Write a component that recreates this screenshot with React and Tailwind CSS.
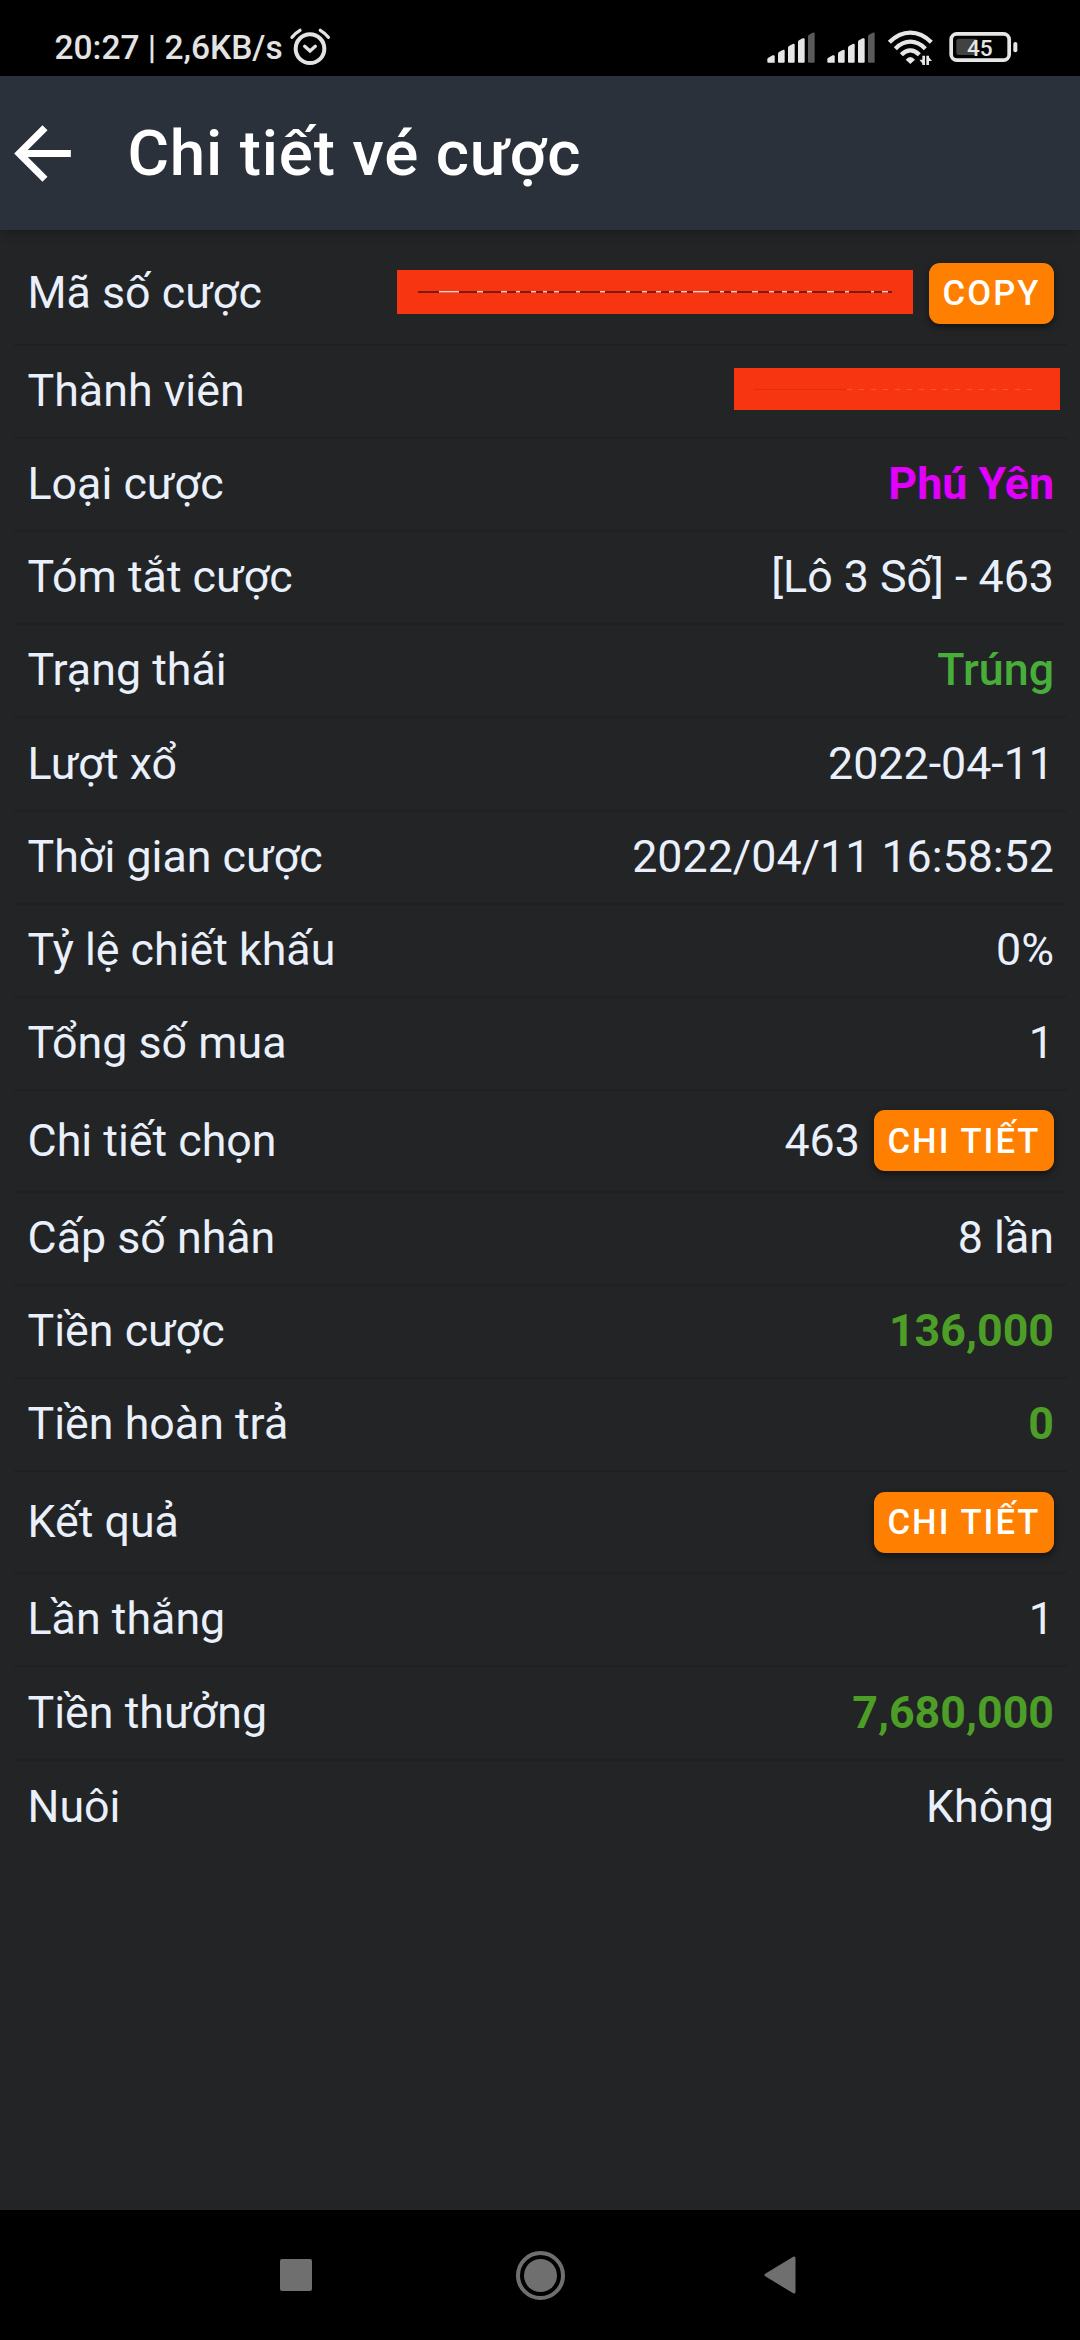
import React from "react"

const rows = [
  { label: "Mã số cược", type: "code" },
  { label: "Thành viên", type: "member" },
  { label: "Loại cược", value: "Phú Yên", style: "font-bold text-[#e100fb]" },
  { label: "Tóm tắt cược", value: "[Lô 3 Số] - 463" },
  { label: "Trạng thái", value: "Trúng", style: "font-medium text-[#48ae3a]" },
  { label: "Lượt xổ", value: "2022-04-11" },
  { label: "Thời gian cược", value: "2022/04/11 16:58:52" },
  { label: "Tỷ lệ chiết khấu", value: "0%" },
  { label: "Tổng số mua", value: "1" },
  { label: "Chi tiết chọn", value: "463", action: "CHI TIẾT" },
  { label: "Cấp số nhân", value: "8 lần" },
  { label: "Tiền cược", value: "136,000", style: "font-bold text-[#4d9e26]" },
  { label: "Tiền hoàn trả", value: "0", style: "font-bold text-[#4d9e26]" },
  { label: "Kết quả", action: "CHI TIẾT" },
  { label: "Lần thắng", value: "1" },
  { label: "Tiền thưởng", value: "7,680,000", style: "font-bold text-[#4d9e26]" },
  { label: "Nuôi", value: "Không" },
]

// [x, width] of the specks left on the strike line of the hidden code
const specks = [
  [42, 20], [80, 6], [104, 6], [119, 4], [134, 5], [146, 4], [157, 5], [179, 4],
  [203, 5], [229, 4], [245, 5], [259, 5], [272, 5], [284, 6], [296, 16], [323, 4],
  [334, 6], [355, 6], [372, 5], [385, 5], [397, 5], [410, 5], [430, 7], [448, 4],
  [474, 3], [485, 6],
]

function AlarmIcon() {
  return (
    <svg className="ml-[6px] h-[76px] w-[42px]" viewBox="865 0 126 228" fill="none" stroke="#e3e3e3" strokeLinecap="round">
      <circle cx="928" cy="146" r="43" strokeWidth="12" />
      <path d="M874 112 Q884 99 898 91M983 112 Q973 99 959 91" strokeWidth="10" />
      <path d="M912 139l16 14 16-14" strokeWidth="10" />
    </svg>
  )
}

function SignalIcon() {
  return (
    <svg className="h-[76px] w-[48px]" viewBox="81 0 144 228" fill="#e6e6e6">
      <path d="M82 178q0-3 3-5l13-7q6-2 6 3v19H85q-3 0-3-3z" />
      <path d="M114 161q0-3 3-5l11-6q6-2 6 3v32q0 3-3 3h-14q-3 0-3-3z" />
      <path d="M144 143q0-3 3-5l11-6q6-2 6 3v50q0 3-3 3h-14q-3 0-3-3z" />
      <path d="M174 126q0-3 3-5l11-6q6-2 6 3v67q0 3-3 3h-14q-3 0-3-3z" />
      <path d="M204 109q0-3 3-5l11-6q6-2 6 3v84q0 3-3 3h-14q-3 0-3-3z" fill="#5a5a5a" />
    </svg>
  )
}

function WifiIcon() {
  return (
    <svg className="ml-[12px] h-[76px] w-[47px]" viewBox="442 0 141 228" fill="none" stroke="#e6e6e6">
      <path d="M449 127Q478 98 512 98T575 127" strokeWidth="13" />
      <path d="M467 146Q488 125 512 125T557 146" strokeWidth="13" />
      <path d="M485 164Q498 151 512 151T539 164" strokeWidth="13" />
      <path d="M498 179Q512 163 526 179L512 192z" fill="#e6e6e6" stroke="none" />
      <path d="M552 167V195M564 195V167" strokeWidth="8" />
      <path d="M539 179l13 16v-16zM577 183l-13-16v16z" fill="#e6e6e6" stroke="none" />
    </svg>
  )
}

function BatteryIcon() {
  return (
    <svg className="ml-[15px] h-[76px] w-[69px]" viewBox="626 0 207 228">
      <rect x="632.5" y="101.5" width="174" height="79" rx="17" fill="none" stroke="#e6e6e6" strokeWidth="11" />
      <path d="M656 116h53v49h-53q-8 0-8-8v-33q0-8 8-8z" fill="#424242" />
      <rect x="819" y="126" width="12" height="31" rx="6" fill="#e6e6e6" />
      <text x="680" y="167" fontSize="68" fontWeight="500" fontFamily="Roboto, sans-serif" fill="#e6e6e6">45</text>
    </svg>
  )
}

function Button({ children }) {
  return (
    <button className="h-[61px] rounded-[11px] bg-[#ff7f00] px-[13.5px] text-[34.6px] leading-none font-medium tracking-[0.06em] text-white shadow-[0_3px_7px_rgba(0,0,0,0.5)]">
      {children}
    </button>
  )
}

function Value({ row }) {
  if (row.type === "code") {
    return (
      <div className="flex items-center gap-[16px]">
        <svg className="mb-[2px] h-[44px] w-[516px] bg-[#f73510]" viewBox="0 0 516 44">
          <rect x="21" y="21" width="474" height="2" fill="#7d1a12" />
          {specks.map(([x, w]) => (
            <rect key={x} x={x} y="21" width={w} height="1.5" fill="#ffd0c4" />
          ))}
        </svg>
        <Button>COPY</Button>
      </div>
    )
  }
  if (row.type === "member") {
    return (
      <svg className="-mr-[5.5px] mb-[5px] h-[42px] w-[325.5px] bg-[#f73510]" viewBox="0 0 325.5 42">
        <path d="M20 21.5H113" stroke="#df2f10" />
        <path d="M113 21.5H305" stroke="#f9563b" strokeDasharray="5 7" />
      </svg>
    )
  }
  return (
    <div className="flex items-center gap-[14px]">
      {row.value && <span className={row.style}>{row.value}</span>}
      {row.action && <Button>{row.action}</Button>}
    </div>
  )
}

export default function App() {
  return (
    <div className="flex h-[2340px] w-[1080px] flex-col bg-[#222426] font-[Roboto,'Noto_Sans',sans-serif]">
      {/* Status bar */}
      <div className="flex h-[76px] shrink-0 items-center justify-between bg-black pr-[62px] pl-[54.5px]">
        <div className="flex items-center text-[33.5px] font-medium text-[#e3e3e3]">
          <span className="pt-[20px] leading-none">20:27 | 2,6KB/s</span>
          <AlarmIcon />
        </div>
        <div className="flex items-center">
          <SignalIcon />
          <div className="ml-[12px]">
            <SignalIcon />
          </div>
          <WifiIcon />
          <BatteryIcon />
        </div>
      </div>

      {/* Header */}
      <div className="flex h-[154px] shrink-0 items-center bg-[#2b313b] shadow-[0_3px_10px_rgba(0,0,0,0.25)]">
        <svg className="size-[85px]" viewBox="0 0 24 24" fill="white">
          <path d="M20 11H7.83l5.59-5.59L12 4l-8 8 8 8 1.41-1.41L7.83 13H20v-2z" />
        </svg>
        <h1 className="ml-[42.5px] pt-[2px] text-[63.7px] leading-none font-medium tracking-[0.0125em] text-white">
          Chi tiết vé cược
        </h1>
      </div>

      {/* Ticket details */}
      <div className="flex-1 px-[13.5px] pt-[13px]">
        {rows.map((row) => (
          <div
            key={row.label}
            className={`flex items-center justify-between border-b-2 border-[#1e1f27] pr-[12.5px] pl-[14px] text-[44.75px] leading-none text-[#e9f0fb] last:border-b-0 ${
              row.action ? "h-[101.8px]" : row.type === "code" ? "h-[102.6px]" : "h-[93.2px]"
            }`}
          >
            <span>{row.label}</span>
            <Value row={row} />
          </div>
        ))}
      </div>

      {/* Navigation bar */}
      <div className="flex h-[130px] shrink-0 items-center justify-between bg-black pr-[284px] pl-[280px]">
        <div className="size-[32px] rounded-[2px] bg-[#6f6f6f]" />
        <div className="ml-[5px] flex size-[49px] items-center justify-center rounded-full border-4 border-[#6f6f6f]">
          <div className="size-[33px] rounded-full bg-[#6f6f6f]" />
        </div>
        <svg className="h-[38px] w-[32px]" viewBox="0 0 32 38" fill="#6f6f6f" stroke="#6f6f6f" strokeWidth="3" strokeLinejoin="round">
          <path d="M2 19L30 2v34z" />
        </svg>
      </div>
    </div>
  )
}
